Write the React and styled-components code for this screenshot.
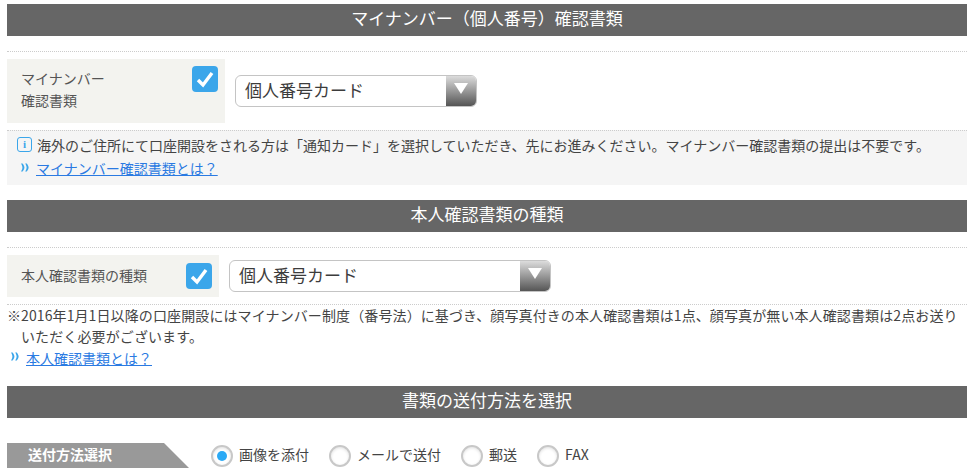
import React from "react";
import styled, { createGlobalStyle } from "styled-components";

const GlobalStyle = createGlobalStyle`
  html, body {
    margin: 0;
    padding: 0;
    background: #fff;
    overflow: hidden;
  }
  body {
    font-family: "Noto Sans CJK JP", "Noto Sans", sans-serif;
    color: #444;
  }
`;

const Page = styled.div`
  width: 960px;
  margin-left: 7px;
  padding-top: 4px;
`;

const Heading = styled.h2`
  margin: ${(p) => p.$top || 0}px 0 0;
  height: 32px;
  line-height: 28px;
  background: #666;
  color: #fff;
  font-size: 17px;
  font-weight: 400;
  text-align: center;
`;

const FormRow = styled.div`
  margin-top: 15px;
  border-top: 1px dotted #ccc;
  padding: 7px 0;
  display: flex;
  align-items: center;
  gap: 10px;
`;

const Label = styled.div`
  width: ${(p) => p.$width}px;
  height: ${(p) => p.$height}px;
  box-sizing: border-box;
  padding: 0 7px 0 14px;
  background: #f3f3ef;
  display: flex;
  justify-content: space-between;
  align-items: ${(p) => (p.$top ? "flex-start" : "center")};
  font-size: 14px;
  line-height: 22px;
  color: #555;
`;

const LabelText = styled.div`
  padding-top: ${(p) => (p.$top ? 8 : 0)}px;
  padding-bottom: ${(p) => (p.$top ? 0 : 3)}px;
`;

const Check = styled.span`
  width: 26px;
  height: 26px;
  margin-top: ${(p) => (p.$top ? 7 : 0)}px;
  border-radius: 4px;
  background: #3ba6ea;
  display: flex;
  align-items: center;
  justify-content: center;
`;

const Select = styled.div`
  width: ${(p) => p.$width}px;
  height: 32px;
  box-sizing: border-box;
  border: 1px solid #c4c4c4;
  border-radius: 6px;
  display: flex;
  overflow: hidden;
  font-size: 17px;
  line-height: 27px;
  color: #3c3c3c;
`;

const SelectValue = styled.div`
  flex: 1;
  padding-left: 9px;
`;

const SelectArrow = styled.div`
  width: 30px;
  background: linear-gradient(#dcdcdc, #555);
  display: flex;
  justify-content: center;
  padding-top: 7px;
  box-sizing: border-box;
`;

const Triangle = styled.span`
  width: 0;
  height: 0;
  border-left: 7px solid transparent;
  border-right: 7px solid transparent;
  border-top: 11px solid #fff;
`;

const Notice = styled.div`
  height: 55px;
  box-sizing: border-box;
  border-top: 1px dotted #ccc;
  background: #f5f5f5;
  padding: 3px 0 0 10px;
  font-size: 14px;
  line-height: 23px;
`;

const NoticeLine = styled.div`
  display: flex;
  align-items: center;
  gap: 5px;
  white-space: nowrap;
`;

const InfoIcon = styled.span`
  width: 15px;
  height: 15px;
  box-sizing: border-box;
  margin-bottom: 3px;
  border: 1px solid #3ba6ea;
  border-radius: 3px;
  color: #3ba6ea;
  font: 700 11px/13px "Liberation Serif", serif;
  text-align: center;
`;

const LinkLine = styled.div`
  display: flex;
  align-items: center;
  gap: 7px;
  padding-left: 4px;
  font-size: 14px;
  line-height: ${(p) => p.$lineHeight}px;
`;

const Chevrons = styled.svg`
  width: 8px;
  height: 9px;
  margin-bottom: 3px;
`;

const DocLink = styled.a`
  color: #2a7ae2;
  text-decoration: underline;
`;

const Caution = styled.div`
  border-top: 1px dotted #ccc;
  font-size: 14px;
  letter-spacing: 0.11px;
  line-height: 21px;
  height: 42px;
  box-sizing: border-box;
  display: flex;
  padding-right: 4px;
`;

const CautionMark = styled.span`
  flex: none;
  width: 14px;
`;

const MethodRow = styled.div`
  margin-top: 25px;
  display: flex;
  align-items: center;
  gap: 22px;
`;

const Ribbon = styled.div`
  width: 182px;
  height: 25px;
  box-sizing: border-box;
  padding-left: 21px;
  background: #999;
  clip-path: polygon(0 0, 157px 0, 100% 100%, 0 100%);
  color: #fff;
  font-size: 14px;
  font-weight: 700;
  line-height: 22px;
`;

const RadioGroup = styled.div`
  display: flex;
  align-items: center;
  gap: 20px;
`;

const RadioItem = styled.label`
  display: flex;
  align-items: center;
  gap: 6px;
  font-size: 14px;
  line-height: 22px;
  color: #444;
`;

const RadioText = styled.span`
  padding-bottom: 3px;
`;

const RadioCircle = styled.span`
  width: 22px;
  height: 22px;
  box-sizing: border-box;
  border: 2px solid #c8c8c8;
  border-radius: 50%;
  background: #fff;
  box-shadow: inset 0 1px 3px rgba(0, 0, 0, 0.12);
  display: flex;
  align-items: center;
  justify-content: center;
`;

const RadioDot = styled.span`
  width: 10px;
  height: 10px;
  border-radius: 50%;
  background: #2aa9f5;
`;

const CheckBox = ({ top }) => (
  <Check $top={top}>
    <svg width="20" height="20" viewBox="0 0 20 20">
      <path d="M3 11l5 5L17 4" fill="none" stroke="#fff" strokeWidth="3.4" />
    </svg>
  </Check>
);

const MoreIcon = () => (
  <Chevrons viewBox="0 0 8 9">
    <path
      d="M0 0.5h1.6C3 2.5 3.4 3.5 3.4 4.5S3 6.5 1.6 8.5H0C1.1 6.5 1.4 5.5 1.4 4.5S1.1 2.5 0 0.5zM4.2 0.5h1.6C7.2 2.5 7.6 3.5 7.6 4.5S7.2 6.5 5.8 8.5H4.2C5.3 6.5 5.6 5.5 5.6 4.5S5.3 2.5 4.2 0.5z"
      fill="#3ba6ea"
    />
  </Chevrons>
);

const methods = ["画像を添付", "メールで送付", "郵送", "FAX"];

export default function App() {
  return (
    <Page>
      <GlobalStyle />
      <Heading>マイナンバー（個人番号）確認書類</Heading>
      <FormRow>
        <Label $width={218} $height={64} $top>
          <LabelText $top>
            マイナンバー
            <br />
            確認書類
          </LabelText>
          <CheckBox top />
        </Label>
        <Select $width={242}>
          <SelectValue>個人番号カード</SelectValue>
          <SelectArrow>
            <Triangle />
          </SelectArrow>
        </Select>
      </FormRow>
      <Notice>
        <NoticeLine>
          <InfoIcon>i</InfoIcon>
          海外のご住所にて口座開設をされる方は「通知カード」を選択していただき、先にお進みください。マイナンバー確認書類の提出は不要です。
        </NoticeLine>
        <LinkLine $lineHeight={23}>
          <MoreIcon />
          <DocLink>マイナンバー確認書類とは？</DocLink>
        </LinkLine>
      </Notice>
      <Heading $top={15}>本人確認書類の種類</Heading>
      <FormRow>
        <Label $width={212} $height={42}>
          <LabelText>本人確認書類の種類</LabelText>
          <CheckBox />
        </Label>
        <Select $width={322}>
          <SelectValue>個人番号カード</SelectValue>
          <SelectArrow>
            <Triangle />
          </SelectArrow>
        </Select>
      </FormRow>
      <Caution>
        <CautionMark>※</CautionMark>
        <div>
          2016年1月1日以降の口座開設にはマイナンバー制度（番号法）に基づき、顔写真付きの本人確認書類は1点、顔写真が無い本人確認書類は2点お送りいただく必要がございます。
        </div>
      </Caution>
      <LinkLine $lineHeight={24}>
        <MoreIcon />
        <DocLink>本人確認書類とは？</DocLink>
      </LinkLine>
      <Heading $top={16}>書類の送付方法を選択</Heading>
      <MethodRow>
        <Ribbon>送付方法選択</Ribbon>
        <RadioGroup>
          {methods.map((m, i) => (
            <RadioItem key={m}>
              <RadioCircle>{i === 0 && <RadioDot />}</RadioCircle>
              <RadioText>{m}</RadioText>
            </RadioItem>
          ))}
        </RadioGroup>
      </MethodRow>
    </Page>
  );
}
